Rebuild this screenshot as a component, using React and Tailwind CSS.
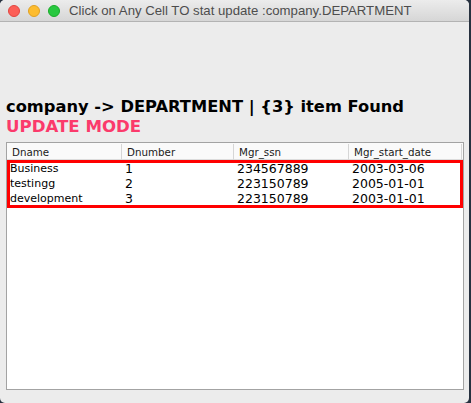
import React from 'react';

const COLS = 'grid grid-cols-[115px_112px_115px_1fr]';

const headers = ['Dname', 'Dnumber', 'Mgr_ssn', 'Mgr_start_date'];

const rows = [
  { dname: 'Business', dnumber: '1', ssn: '234567889', start: '2003-03-06' },
  { dname: 'testingg', dnumber: '2', ssn: '223150789', start: '2005-01-01' },
  { dname: 'development', dnumber: '3', ssn: '223150789', start: '2003-01-01' },
];

function TrafficLights() {
  return (
    <div className="flex items-center gap-[8px] pl-[8px]">
      <span className="w-[12px] h-[12px] rounded-full bg-[#fc5f57] border border-[#e14640]" />
      <span className="w-[12px] h-[12px] rounded-full bg-[#fdbc2e] border border-[#dfa023]" />
      <span className="w-[12px] h-[12px] rounded-full bg-[#28c840] border border-[#1aab29]" />
    </div>
  );
}

export default function App() {
  const sans = { fontFamily: '"DejaVu Sans", sans-serif' };

  return (
    <div className="w-[471px] h-[403px] bg-[#27313f] overflow-hidden">
      <div className="w-[469px] h-[403px] rounded-[5px] overflow-hidden bg-[#ececec] flex flex-col">
        {/* title bar */}
        <div className="h-[22px] shrink-0 flex items-center bg-gradient-to-b from-[#ececec] to-[#d6d6d6] border-b border-[#b3b3b3]">
          <TrafficLights />
          <span
            className="ml-[9px] text-[13.2px] text-[#4d4d4d] leading-none"
            style={{ fontFamily: '"Liberation Sans", Arial, sans-serif' }}
          >
            Click on Any Cell TO stat update :company.DEPARTMENT
          </span>
        </div>

        <div className="flex-1 flex flex-col px-[6px] pt-[75px] pb-[13px]" style={sans}>
          <div className="text-[16.3px] font-bold leading-[20px] text-black whitespace-nowrap">
            company -&gt; DEPARTMENT | {'{3}'} item Found
          </div>
          <div className="text-[16.6px] font-bold leading-[20px] text-[#fb3a6b]">UPDATE MODE</div>

          {/* table */}
          <div className="mt-[5px] w-[458px] flex-1 border border-[#a3a3a3] bg-white flex flex-col">
            <div className={`${COLS} h-[17px] border-b border-[#dcdcdc] bg-[#fafafa]`}>
              {headers.map((h, i) => (
                <div
                  key={h}
                  className={`pl-[5px] text-[10.3px] leading-[16px] text-[#1a1a1a] ${i < 3 ? 'border-r border-[#d6d6d6] my-[1px]' : 'border-r border-[#d6d6d6] my-[1px] mr-[1px]'}`}
                >
                  {h}
                </div>
              ))}
            </div>

            <div className="relative h-[48px] pt-[1px]">
              {rows.map((r) => (
                <div key={r.dname} className={`${COLS} h-[15px] text-black`}>
                  <div className="pl-[3px] text-[11px] leading-[15px]">{r.dname}</div>
                  <div className="pl-[3px] text-[12.5px] leading-[15px]">{r.dnumber}</div>
                  <div className="pl-[3px] text-[12.5px] leading-[15px]">{r.ssn}</div>
                  <div className="pl-[3px] text-[12.5px] leading-[15px]">{r.start}</div>
                </div>
              ))}
              {/* selection outline drawn over the rows */}
              <div className="absolute inset-0 border-[3px] border-[#ff0000] pointer-events-none" />
            </div>
          </div>
        </div>
      </div>
    </div>
  );
}
